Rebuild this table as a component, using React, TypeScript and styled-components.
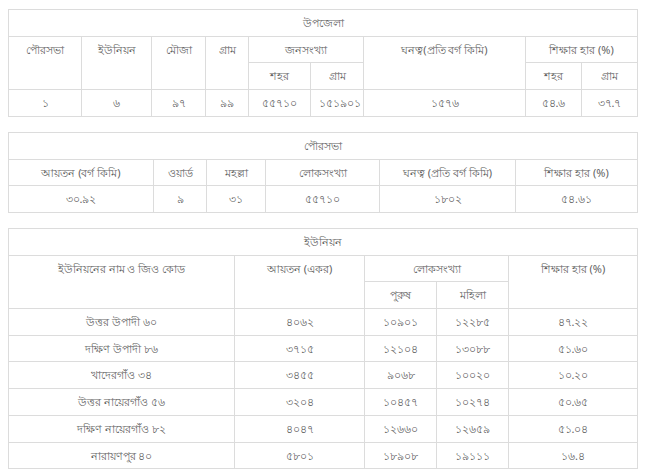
import React from "react";
import styled, { createGlobalStyle } from "styled-components";

const GlobalStyle = createGlobalStyle`
  html, body {
    margin: 0;
    padding: 0;
    background: #fff;
  }
  body {
    font-family: "Noto Sans", "DejaVu Sans", sans-serif;
    color: #626262;
  }
`;

const Page = styled.div`
  padding: 9px 12px 0 8px;
  display: flex;
  flex-direction: column;
  gap: 15px;
`;

const Table = styled.table`
  width: 629px;
  border-collapse: collapse;
  table-layout: fixed;
  font-size: 11px;
`;

const Cell = styled.td`
  border: 1px solid #dcdcdc;
  padding: 5px 8px;
  line-height: 15.7px;
  text-align: center;
  vertical-align: top;
  white-space: nowrap;
  font-weight: normal;
`;

type Row = string[];

const upazila: Row = ["১", "৬", "৯৭", "৯৯", "৫৫৭১০", "১৫১৯০১", "১৫৭৬", "৫৪.৬", "৩৭.৭"];
const pourashava: Row = ["৩০.৯২", "৯", "৩১", "৫৫৭১০", "১৮০২", "৫৪.৬১"];

const unions: Row[] = [
  ["উত্তর উপাদী ৬০", "৪০৬২", "১০৯০১", "১২২৮৫", "৪৭.২২"],
  ["দক্ষিণ উপাদী ৮৬", "৩৭১৫", "১২১০৪", "১৩০৮৮", "৫১.৬০"],
  ["খাদেরগাঁও ৩৪", "৩৪৫৫", "৯০৬৮", "১০০২০", "১০.২০"],
  ["উত্তর নায়েরগাঁও ৫৬", "৩২০৪", "১০৪৫৭", "১০২৭৪", "৫০.৬৫"],
  ["দক্ষিণ নায়েরগাঁও ৮২", "৪০৪৭", "১২৬৬০", "১২৬৫৯", "৫১.০৪"],
  ["নারায়ণপুর ৪০", "৫৮০১", "১৮৯০৮", "১৯১১১", "১৬.৪"],
];

const Cols = ({ widths }: { widths: number[] }) => (
  <colgroup>
    {widths.map((w, i) => (
      <col key={i} style={{ width: w }} />
    ))}
  </colgroup>
);

const DataRow = ({ cells }: { cells: Row }) => (
  <tr>
    {cells.map((c, i) => (
      <Cell key={i}>{c}</Cell>
    ))}
  </tr>
);

export default function App() {
  return (
    <>
      <GlobalStyle />
      <Page>
        <Table>
          <Cols widths={[73, 70, 54, 43, 62, 53, 162, 56, 56]} />
          <tbody>
            <tr>
              <Cell colSpan={9}>উপজেলা</Cell>
            </tr>
            <tr>
              <Cell rowSpan={2}>পৌরসভা</Cell>
              <Cell rowSpan={2}>ইউনিয়ন</Cell>
              <Cell rowSpan={2}>মৌজা</Cell>
              <Cell rowSpan={2}>গ্রাম</Cell>
              <Cell colSpan={2}>জনসংখ্যা</Cell>
              <Cell rowSpan={2}>ঘনত্ব(প্রতি বর্গ কিমি)</Cell>
              <Cell colSpan={2}>শিক্ষার হার (%)</Cell>
            </tr>
            <tr>
              <Cell>শহর</Cell>
              <Cell>গ্রাম</Cell>
              <Cell>শহর</Cell>
              <Cell>গ্রাম</Cell>
            </tr>
            <DataRow cells={upazila} />
          </tbody>
        </Table>

        <Table>
          <Cols widths={[145, 53, 59, 114, 136, 122]} />
          <tbody>
            <tr>
              <Cell colSpan={6}>পৌরসভা</Cell>
            </tr>
            <tr>
              <Cell>আয়তন (বর্গ কিমি)</Cell>
              <Cell>ওয়ার্ড</Cell>
              <Cell>মহল্লা</Cell>
              <Cell>লোকসংখ্যা</Cell>
              <Cell>ঘনত্ব (প্রতি বর্গ কিমি)</Cell>
              <Cell>শিক্ষার হার (%)</Cell>
            </tr>
            <DataRow cells={pourashava} />
          </tbody>
        </Table>

        <Table>
          <Cols widths={[226, 130, 72, 72, 129]} />
          <tbody>
            <tr>
              <Cell colSpan={5}>ইউনিয়ন</Cell>
            </tr>
            <tr>
              <Cell rowSpan={2}>ইউনিয়নের নাম ও জিও কোড</Cell>
              <Cell rowSpan={2}>আয়তন (একর)</Cell>
              <Cell colSpan={2}>লোকসংখ্যা</Cell>
              <Cell rowSpan={2}>শিক্ষার হার (%)</Cell>
            </tr>
            <tr>
              <Cell>পুরুষ</Cell>
              <Cell>মহিলা</Cell>
            </tr>
            {unions.map((u, i) => (
              <DataRow key={i} cells={u} />
            ))}
          </tbody>
        </Table>
      </Page>
    </>
  );
}
